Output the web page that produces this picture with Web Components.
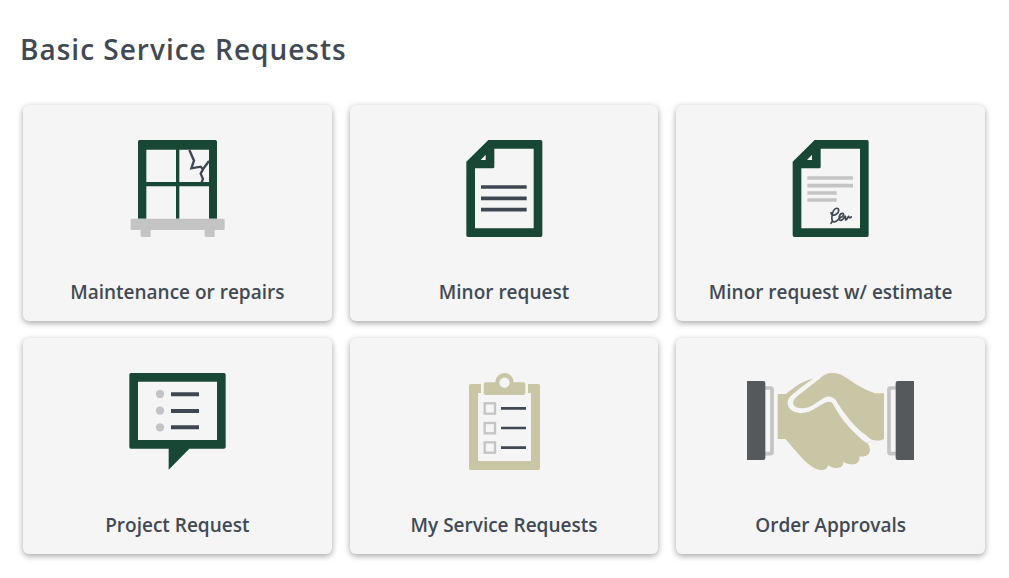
<!DOCTYPE html>
<html lang="en">
<head>
<meta charset="utf-8">
<meta name="viewport" content="width=device-width, initial-scale=1">
<title>Basic Service Requests</title>
<style>
body { margin: 0; background: #fff; color: #414a54; font-family: "Open Sans", "Noto Sans", sans-serif; }
</style>
</head>
<body>
<service-requests heading="Basic Service Requests">
  <request-card icon="window">Maintenance or repairs</request-card>
  <request-card icon="document">Minor request</request-card>
  <request-card icon="estimate">Minor request w/ estimate</request-card>
  <request-card icon="project">Project Request</request-card>
  <request-card icon="clipboard">My Service Requests</request-card>
  <request-card icon="handshake">Order Approvals</request-card>
</service-requests>

<script>
const page = `
  <path fill="#184735" fill-rule="evenodd" d="M116 30H273Q278 30 278 35V316Q278 321 273 321H55Q50 321 50 316V95ZM134 56V110Q134 115 129 115H76V295H252V56ZM108 74V90H93Z"/>`;

const icons = {
  window: `<svg viewBox="-81 30 507 294" aria-hidden="true">
    <path fill="#184735" fill-rule="evenodd" d="M54 266V35Q54 30 59 30H286Q291 30 291 35V266ZM79 59V156H168V59ZM178 59V156H267V59ZM79 169V266H168V169ZM178 169V266H267V169Z"/>
    <path fill="none" stroke="#3f4752" stroke-width="7" d="M208 60 222 92 214 115 242 110 249 118 242 131 249 147 245 157M267 93 247 120"/>
    <g fill="#c4c4c4"><rect x="32" y="266" width="282" height="34" rx="4"/><path d="M62 298H92V317Q92 321 88 321H66Q62 321 62 317ZM254 298H284V317Q284 321 280 321H258Q254 321 254 317Z"/></g>
  </svg>`,
  document: `<svg viewBox="-92 30 507 294" aria-hidden="true">${page}
    <path stroke="#3f4752" stroke-width="11" d="M94 171H231M94 205H231M94 239H231"/>
  </svg>`,
  estimate: `<svg viewBox="-87 30 507 294" aria-hidden="true"><g transform="translate(3 0)">${page}</g>
    <path stroke="#c4c4c4" stroke-width="11" d="M97 144H234M97 167H234M97 189H185M97 210H185"/>
    <path fill="none" stroke="#3f4752" stroke-width="5" stroke-linecap="round" stroke-linejoin="round" d="M168 280 173 272M168 248C169 262 191 254 191 241C191 232 180 233 175 243C169 255 168 277 178 276C186 275 191 266 198 262C206 260 209 250 202 250C193 250 188 271 197 271C204 271 207 264 210 258C214 260 210 271 213 270C217 269 218 260 221 259C222 262 221 266 229 261"/>
  </svg>`,
  project: `<svg viewBox="-81 24 507 294" aria-hidden="true">
    <path fill="#184735" fill-rule="evenodd" d="M33 24H312Q317 24 317 29V246Q317 251 312 251H208L146 314V251H33Q28 251 28 246V29Q28 24 33 24ZM54 50V225H291V50Z"/>
    <g fill="#c4c4c4"><circle cx="120" cy="87" r="12.500"/><circle cx="120" cy="137" r="12.500"/><circle cx="120" cy="187" r="12.500"/></g>
    <path stroke="#3f4752" stroke-width="12" d="M153 88H237M153 138H237M153 187H237"/>
  </svg>`,
  clipboard: `<svg viewBox="-93 24 507 294" aria-hidden="true">
    <path fill="#c9c6a5" d="M62 57H93V84H84V288H243V84H234V57H265Q270 57 270 62V310Q270 315 265 315H62Q57 315 57 310V62Q57 57 62 57Z"/>
    <path fill="#c9c6a5" fill-rule="evenodd" d="M107 52H136A27.500 28 0 0 1 191 52H220Q226 52 226 58V84Q226 90 220 90H107Q101 90 101 84V58Q101 52 107 52ZM148 53A15.500 15.500 0 0 0 179 53A15.500 15.500 0 0 0 148 53Z"/>
    <g fill="none" stroke="#c4c4c4" stroke-width="7"><rect x="104" y="115" width="31" height="31"/><rect x="104" y="174" width="31" height="31"/><rect x="104" y="232" width="31" height="31"/></g>
    <path stroke="#3f4752" stroke-width="8" d="M153 130H228M153 189H228M153 248H228"/>
  </svg>`,
  handshake: `<svg viewBox="18 24 507 294" aria-hidden="true">
    <path fill="#c9c6a5" d="M113 87H138C164 66 192 44 220 42L235 45C250 30 260 24 274 24C298 23 310 32 330 46C355 64 382 77 405 85H432V222Q420 230 404 226L382 235Q390 243 390 254C390 268 378 277 358 274C361 286 353 297 341 298C330 299 320 296 310 290C311 303 302 309 290 309C278 309 270 305 265 300C263 312 252 316 240 315C204 309 169 258 136 222H113Z"/>
    <path fill="#f5f5f5" d="M220 42C200 53 173 75 153 92C133 110 143 144 185 144C216 144 237 120 259 112C271 108 276 111 282 122C303 164 345 209 380 234L404 227C394 225 386 219 378 211C342 185 314 147 292 113C284 96 268 89 250 100C231 111 213 130 187 130C162 130 151 116 166 99C184 82 220 58 241 38Z"/>
    <g fill="none" stroke="#c4c4c4" stroke-width="11"><path d="M75 69H92Q96 69 96 73V262Q96 266 92 266H75M468 69H451Q447 69 447 73V262Q447 266 451 266H468"/></g>
    <path fill="#55595c" d="M21 48H70Q76 48 76 54V279Q76 285 70 285H21ZM522 48H473Q467 48 467 54V279Q467 285 473 285H522Z"/>
  </svg>`
};

class RequestCard extends HTMLElement {
  connectedCallback() {
    const root = this.attachShadow({ mode: "open" });
    root.innerHTML = `
      <style>
        :host { display: block; min-width: 0; }
        a { display: flex; flex-direction: column; align-items: center; gap: 41px;
            box-sizing: border-box; height: 100%; padding: 35px 12px 16px;
            border-radius: 6px; background: #f5f5f5; box-shadow: 0 2px 6px rgba(0, 0, 0, .36);
            color: inherit; text-decoration: none; text-align: center;
            font-size: 19px; font-weight: 600; line-height: 26px; }
        svg { display: block; width: 169px; height: 98px; max-width: 100%; }
      </style>
      <a href="#${this.getAttribute("icon")}">${icons[this.getAttribute("icon")]}<span><slot></slot></span></a>`;
  }
}
customElements.define("request-card", RequestCard);

class ServiceRequests extends HTMLElement {
  connectedCallback() {
    const root = this.attachShadow({ mode: "open" });
    root.innerHTML = `
      <style>
        :host { display: block; padding: 29px 24px 24px 23px; }
        h1 { margin: 0 0 36px -3px; font-size: 28px; font-weight: 600; line-height: 40px; letter-spacing: 1px; }
        .cards { display: grid; grid-template-columns: repeat(3, minmax(0, 1fr)); gap: 17px 18px; }
      </style>
      <h1></h1>
      <div class="cards"><slot></slot></div>`;
    root.querySelector("h1").textContent = this.getAttribute("heading");
  }
}
customElements.define("service-requests", ServiceRequests);
</script>
</body>
</html>
